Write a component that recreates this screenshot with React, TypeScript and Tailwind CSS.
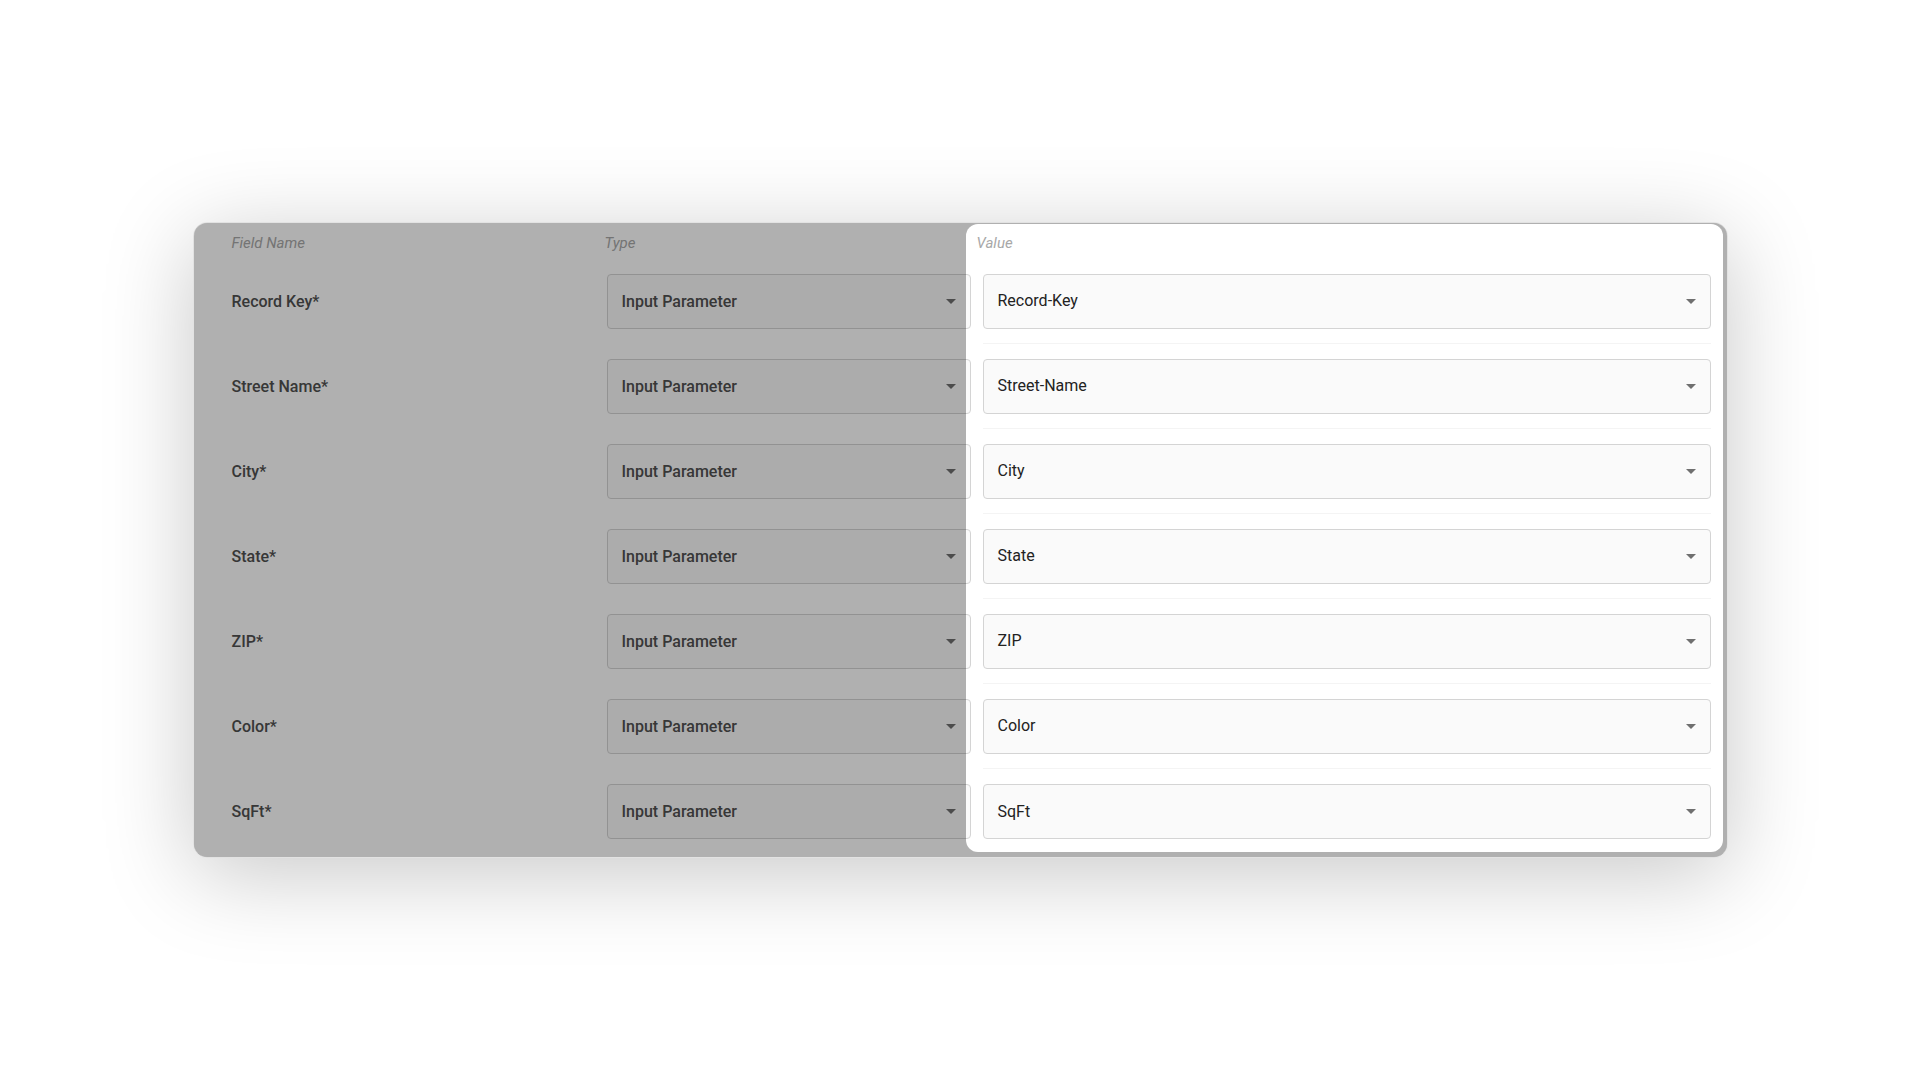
import React from "react";

const rows = [
  { label: "Record Key*", value: "Record-Key" },
  { label: "Street Name*", value: "Street-Name" },
  { label: "City*", value: "City" },
  { label: "State*", value: "State" },
  { label: "ZIP*", value: "ZIP" },
  { label: "Color*", value: "Color" },
  { label: "SqFt*", value: "SqFt" },
];

function ArrowDrop() {
  return (
    <svg width="10" height="5" viewBox="0 0 10 5" className="shrink-0">
      <path d="M0 0l5 5 5-5z" fill="#6f6f6f" />
    </svg>
  );
}

function Select({ text, dim }: { text: string; dim?: boolean }) {
  return (
    <div className="flex h-[55px] items-center justify-between rounded-[4px] border border-[#d4d4d4] bg-[#fafafa] px-[14px]">
      <span className={`text-base ${dim ? "font-medium text-[#505050]" : "text-[#222222]"}`}>{text}</span>
      <ArrowDrop />
    </div>
  );
}

export default function App() {
  return (
    <div className="flex h-screen w-full items-center justify-center bg-white font-['Roboto','Liberation_Sans',sans-serif]">
      {/* Card */}
      <div className="relative w-[1535px] overflow-hidden rounded-[14px] border border-[#e2e2e2] bg-white pb-[3px] pl-[38px] pr-[15px] shadow-[0_16px_90px_rgba(0,0,0,0.22)]">
        <div className="grid grid-cols-[363px_364px_728px] gap-x-3">
          {/* Header */}
          <div className="flex h-[36px] items-center pt-1 text-[15px] italic text-[#a8a8a8]">Field Name</div>
          <div className="-ml-0.5 flex h-[36px] items-center pt-1 text-[15px] italic text-[#a8a8a8]">Type</div>
          <div className="-ml-1.5 flex h-[36px] items-center pt-1 text-[15px] italic text-[#a8a8a8]">Value</div>

          {/* Rows */}
          {rows.map((row, i) => (
            <React.Fragment key={row.label}>
              <div className="flex h-[85px] items-center text-base font-medium text-[#505050]">{row.label}</div>
              <div className="flex h-[85px] flex-col justify-center">
                <Select text="Input Parameter" dim />
              </div>
              <div
                className={`flex h-[85px] flex-col justify-center ${
                  i < rows.length - 1 ? "border-b border-[#f4f4f4]" : ""
                }`}
              >
                <Select text={row.value} />
              </div>
            </React.Fragment>
          ))}
        </div>

        {/* Spotlight on the Value column */}
        <div className="pointer-events-none absolute bottom-[5px] left-[772px] right-[4px] top-[1px] rounded-[12px] shadow-[0_0_0_2000px_rgba(0,0,0,0.31)]" />
      </div>
    </div>
  );
}
